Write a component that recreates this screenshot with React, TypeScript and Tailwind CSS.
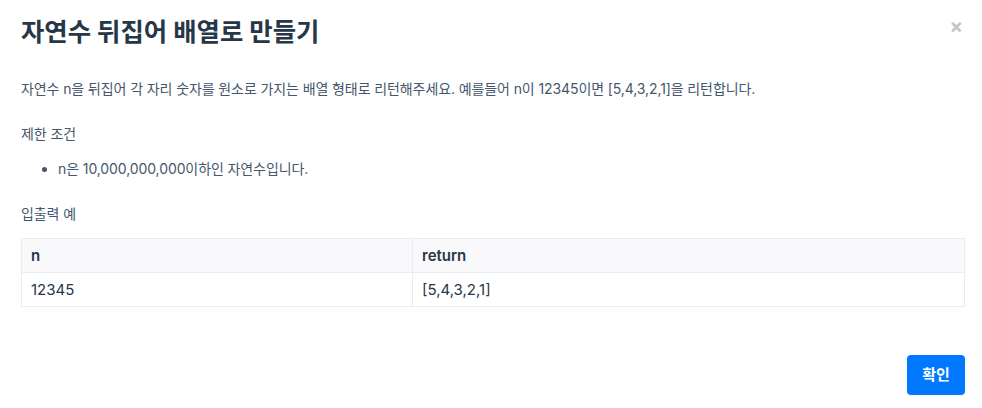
export default function App() {
  return (
    <div
      className="relative w-[982px] h-[408px] bg-white text-[#263747]"
      style={{ fontFamily: 'Inter, "Noto Sans CJK KR", sans-serif' }}
    >
      <button className="absolute right-[19px] top-[16px] text-[#c5c5c5] text-[20px] leading-none font-bold">
        ×
      </button>
      <div className="px-[21px] pt-[15px]">
        <h2 className="text-[25.4px] font-bold leading-[34px] text-[#263747]">자연수 뒤집어 배열로 만들기</h2>
        <div className="mt-[29px] text-[14px] leading-[22px] text-[#44576c] tracking-[-0.1px]">
          <p>
            자연수 n을 뒤집어 각 자리 숫자를 원소로 가지는 배열 형태로 리턴해주세요. 예를들어 n이 12345이면
            [5,4,3,2,1]을 리턴합니다.
          </p>
          <p className="mt-[23px]">제한 조건</p>
          <ul className="mt-[13px] list-disc pl-[37px]">
            <li>n은 10,000,000,000이하인 자연수입니다.</li>
          </ul>
          <p className="mt-[23px]">입출력 예</p>
          <table className="mt-[13px] w-[944px] border-collapse text-[15px] text-[#263747] tracking-normal">
            <thead>
              <tr className="bg-[#f9f9fc]">
                <th className="w-[391px] border border-[#e9ecf3] px-[9px] h-[34px] text-left font-semibold">n</th>
                <th className="border border-[#e9ecf3] px-[9px] h-[34px] text-left font-semibold">return</th>
              </tr>
            </thead>
            <tbody>
              <tr>
                <td className="border border-[#e9ecf3] px-[9px] h-[34px]">12345</td>
                <td className="border border-[#e9ecf3] px-[9px] h-[34px]">[5,4,3,2,1]</td>
              </tr>
            </tbody>
          </table>
        </div>
        <div className="mt-[48px] flex justify-end">
          <button className="mr-[-4px] h-[40px] w-[58px] rounded-[4px] bg-[#0078ff] text-[15px] font-bold text-white">
            확인
          </button>
        </div>
      </div>
    </div>
  )
}
